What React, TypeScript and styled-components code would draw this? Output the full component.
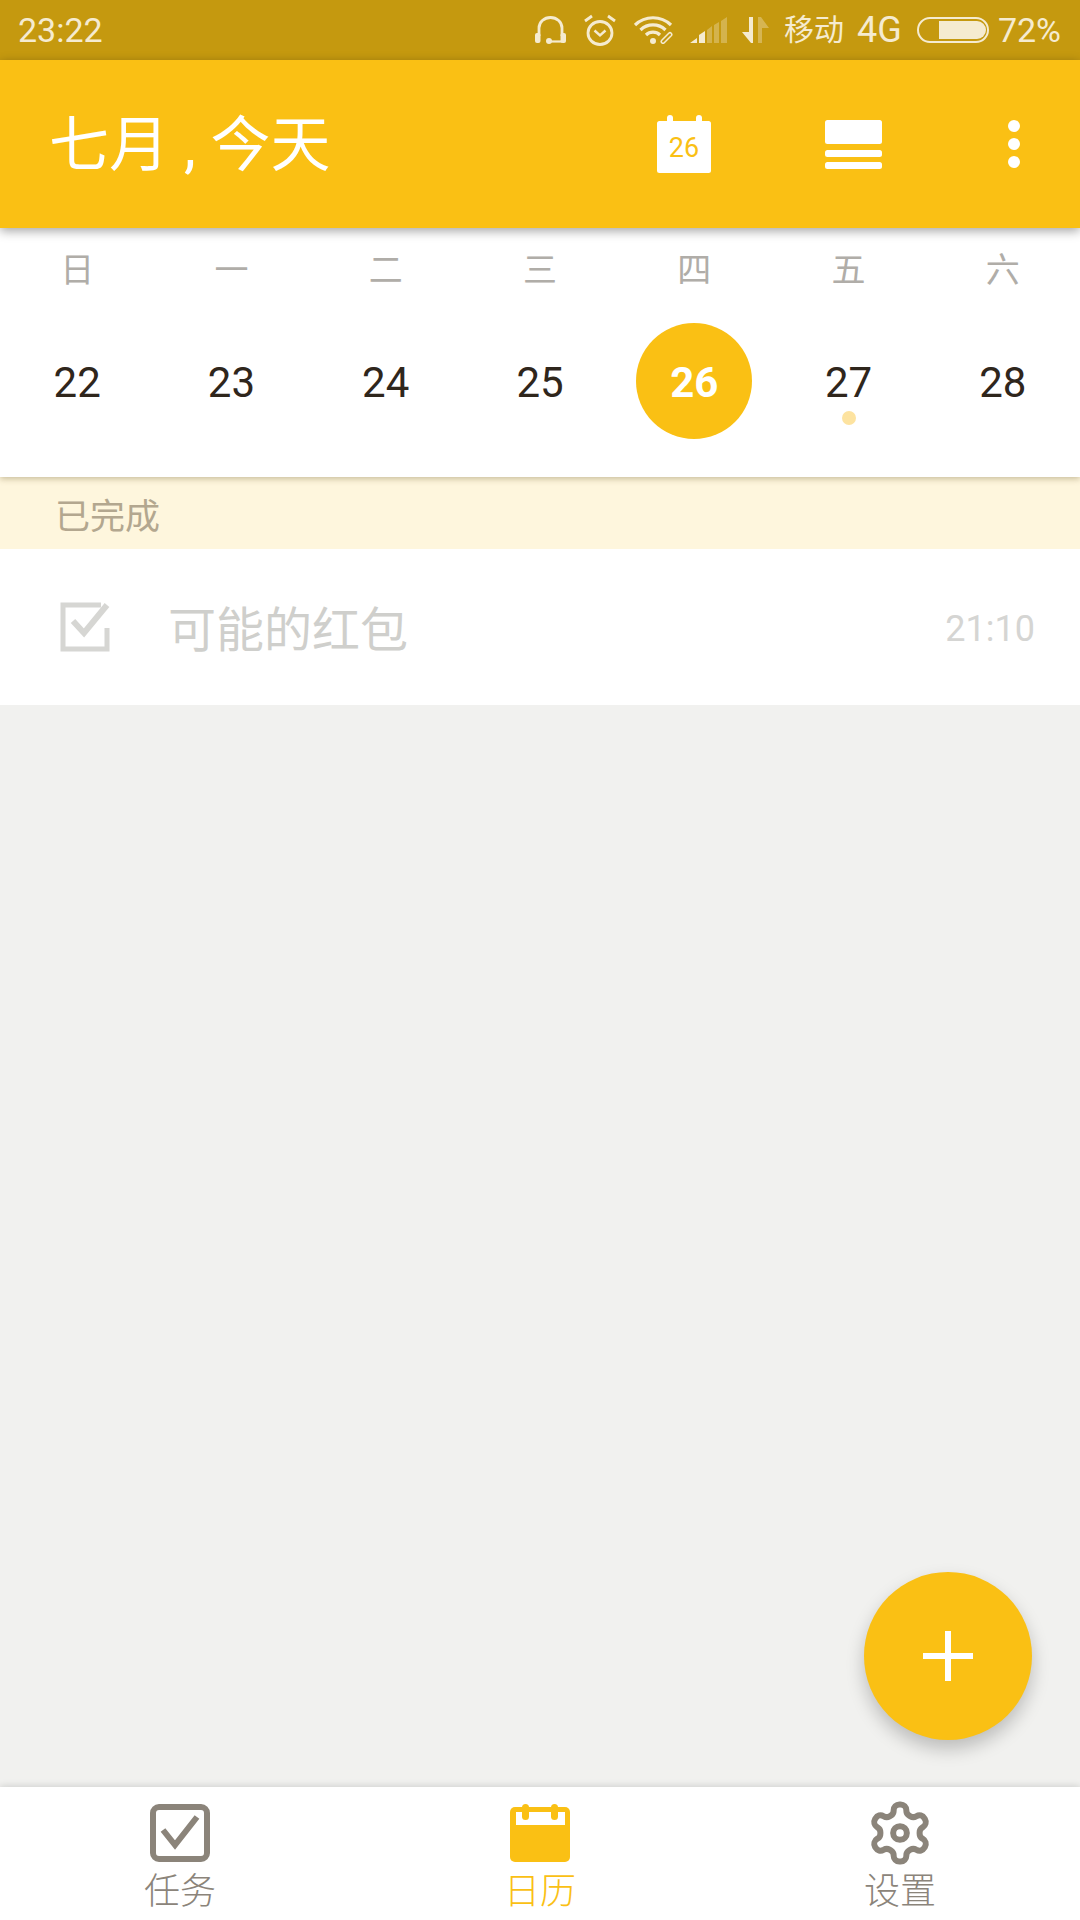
import React from "react";
import styled, { createGlobalStyle } from "styled-components";

const YELLOW = "#fac014";
const STATUS_INK = "#f5ebd0";
const NAV_GREY = "#8b847a";
const FONT = `Roboto, "Noto Sans CJK SC", sans-serif`;

const GlobalStyle = createGlobalStyle`
  html, body {
    margin: 0;
    padding: 0;
    background: #f1f1ef;
  }
  * {
    box-sizing: border-box;
  }
`;

const S = {
  Page: styled.div`
    width: 1080px;
    height: 1920px;
    display: flex;
    flex-direction: column;
    overflow: hidden;
    font-family: ${FONT};
    background: #f1f1ef;
  `,
  StatusBar: styled.div`
    height: 60px;
    flex: none;
    display: flex;
    align-items: center;
    padding: 0 19px 0 18px;
    background: #c5990f;
    color: ${STATUS_INK};
    font-size: 34px;
    line-height: 60px;
  `,
  Clock: styled.span`
    flex: 1;
  `,
  StatusIcons: styled.div`
    display: flex;
    align-items: center;
  `,
  StatusText: styled.span<{ $left: number; $size?: number }>`
    margin-left: ${({ $left }) => $left}px;
    font-size: ${({ $size }) => $size ?? 34}px;
  `,
  StatusGlyph: styled.svg<{ $left: number }>`
    display: block;
    margin-left: ${({ $left }) => $left}px;
  `,
  AppBar: styled.header`
    height: 168px;
    flex: none;
    display: flex;
    align-items: center;
    padding-left: 49px;
    background: ${YELLOW};
    color: #fff;
    position: relative;
    z-index: 3;
    box-shadow: 0 3px 10px rgba(0, 0, 0, 0.36);
  `,
  Title: styled.h1`
    flex: 1;
    margin: 4px 0 0;
    font-size: 60px;
    font-weight: 400;
    line-height: 1;
    white-space: pre;
  `,
  ActionSlot: styled.div<{ $width: number }>`
    width: ${({ $width }) => $width}px;
    height: 100%;
    display: flex;
    align-items: center;
    justify-content: center;
  `,
  CalendarAction: styled.div`
    width: 54px;
    height: 58px;
    position: relative;
  `,
  CalendarActionDay: styled.span`
    position: absolute;
    left: 0;
    right: 0;
    top: 17px;
    text-align: center;
    color: ${YELLOW};
    font-size: 27px;
    line-height: 32px;
  `,
  Week: styled.section`
    height: 249px;
    flex: none;
    background: #fff;
    position: relative;
    z-index: 2;
    box-shadow: 0 2px 6px rgba(90, 70, 20, 0.32);
  `,
  WeekRow: styled.div`
    display: grid;
    grid-template-columns: repeat(7, 1fr);
  `,
  WeekdayRow: styled.div`
    display: grid;
    grid-template-columns: repeat(7, 1fr);
    padding-top: 22px;
    height: 95px;
  `,
  Weekday: styled.span`
    text-align: center;
    font-size: 34px;
    line-height: 40px;
    color: #b0ada8;
  `,
  DayCell: styled.div`
    height: 116px;
    display: flex;
    align-items: center;
    justify-content: center;
    position: relative;
  `,
  DayNumber: styled.span<{ $today?: boolean }>`
    width: 116px;
    height: 116px;
    padding-top: 2px;
    display: flex;
    align-items: center;
    justify-content: center;
    border-radius: 50%;
    font-size: 42px;
    font-weight: ${({ $today }) => ($today ? 700 : 400)};
    color: ${({ $today }) => ($today ? "#fff" : "#2f261c")};
    background: ${({ $today }) => ($today ? YELLOW : "transparent")};
  `,
  EventDot: styled.span`
    position: absolute;
    left: 50%;
    top: 88px;
    width: 14px;
    height: 14px;
    margin-left: -7px;
    border-radius: 50%;
    background: #fde3a0;
  `,
  SectionLabel: styled.div`
    height: 72px;
    flex: none;
    display: flex;
    align-items: center;
    padding-left: 55px;
    background: #fef6dd;
    color: #b3a78f;
    font-size: 35px;
  `,
  TaskRow: styled.div`
    height: 156px;
    flex: none;
    display: flex;
    align-items: center;
    padding: 0 45px 0 60px;
    background: #fff;
  `,
  TaskTitle: styled.span`
    flex: 1;
    margin-left: 58px;
    margin-bottom: 3px;
    font-size: 48px;
    color: #cfcfcc;
  `,
  TaskTime: styled.span`
    margin-top: 3px;
    font-size: 36px;
    color: #d5d5d3;
  `,
  Content: styled.main`
    flex: 1;
    position: relative;
    background: #f1f1ef;
  `,
  Fab: styled.button`
    position: absolute;
    right: 48px;
    bottom: 47px;
    width: 168px;
    height: 168px;
    padding: 0;
    border: 0;
    border-radius: 50%;
    display: flex;
    align-items: center;
    justify-content: center;
    background: ${YELLOW};
    box-shadow: 0 9px 18px rgba(0, 0, 0, 0.22);
  `,
  BottomNav: styled.nav`
    height: 133px;
    flex: none;
    display: grid;
    grid-template-columns: repeat(3, 1fr);
    background: #fff;
    position: relative;
    box-shadow: 0 -1px 7px rgba(0, 0, 0, 0.14);
  `,
  NavItem: styled.div<{ $active?: boolean }>`
    display: flex;
    flex-direction: column;
    align-items: center;
    color: ${({ $active }) => ($active ? YELLOW : NAV_GREY)};
    font-size: 36px;
    font-weight: 300;
  `,
  NavIcon: styled.div`
    height: 81px;
    display: flex;
    align-items: flex-end;
    padding-bottom: 6px;
  `,
  NavLabel: styled.span`
    line-height: 40px;
    margin-top: 4px;
  `,
  GearSvg: styled.svg`
    display: block;
    margin-bottom: -3px;
  `,
};

const WEEKDAYS = ["日", "一", "二", "三", "四", "五", "六"];
const DAYS = [22, 23, 24, 25, 26, 27, 28];

const HeadsetGlyph = () => (
  <S.StatusGlyph $left={0} width="31" height="28" viewBox="0 0 31 28">
    <path d="M4 20V12a11.500 10.500 0 0 1 23 0v8" fill="none" stroke={STATUS_INK} strokeWidth="2.800" />
    <rect x="0" y="17" width="5.500" height="10" rx="2" fill={STATUS_INK} />
    <rect x="25.500" y="17" width="5.500" height="10" rx="2" fill={STATUS_INK} />
    <path d="M14 25.500h13" stroke={STATUS_INK} strokeWidth="2.200" />
    <circle cx="14" cy="25" r="3" fill={STATUS_INK} />
  </S.StatusGlyph>
);

const AlarmGlyph = () => (
  <S.StatusGlyph $left={18} width="32" height="32" viewBox="0 0 32 32">
    <ellipse cx="16" cy="19" rx="12" ry="11.500" fill="none" stroke={STATUS_INK} strokeWidth="2.800" />
    <path d="M10.500 16.500l5.500 5 5.500-5" fill="none" stroke={STATUS_INK} strokeWidth="2.400" />
    <path d="M1 7l7-5M31 7l-7-5" stroke={STATUS_INK} strokeWidth="2.800" />
  </S.StatusGlyph>
);

const WifiGlyph = () => (
  <S.StatusGlyph $left={18} width="41" height="28" viewBox="0 0 41 28">
    <path d="M1 9a26 26 0 0 1 36 0M6.500 14a18 18 0 0 1 25 0M12 19a10 10 0 0 1 14 0" fill="none" stroke={STATUS_INK} strokeWidth="3.200" />
    <circle cx="19" cy="25" r="3" fill={STATUS_INK} />
    <path d="M29 25.500l7-7" stroke={STATUS_INK} strokeWidth="5" strokeLinecap="round" />
    <path d="M29 25.500l7-7" stroke="#c5990f" strokeWidth="2" strokeLinecap="round" />
  </S.StatusGlyph>
);

const SignalGlyph = () => (
  <S.StatusGlyph $left={15} width="37" height="26" viewBox="0 0 37 26">
    <path d="M0 26l7-5v5zM9 26v-8l6-4v12z" fill={STATUS_INK} />
    <path d="M17 26V13l5-4v17zM24 26V8l5-3v21zM31 26V4l6-4v26z" fill={STATUS_INK} opacity="0.32" />
  </S.StatusGlyph>
);

const TrafficGlyph = () => (
  <S.StatusGlyph $left={15} width="27" height="26" viewBox="0 0 27 26">
    <path d="M7 0h4v26H9L0 15h7z" fill={STATUS_INK} />
    <path d="M16 0h3l8 11h-7v15h-4z" fill={STATUS_INK} opacity="0.35" />
  </S.StatusGlyph>
);

const BatteryGlyph = () => (
  <S.StatusGlyph $left={15} width="72" height="26" viewBox="0 0 72 26">
    <rect x="1" y="1" width="70" height="24" rx="12" fill="none" stroke={STATUS_INK} strokeWidth="2" />
    <path d="M22 4h38a9 9 0 0 1 0 18H22z" fill={STATUS_INK} />
  </S.StatusGlyph>
);

const ListViewIcon = () => (
  <svg width="57" height="49" viewBox="0 0 57 49">
    <rect x="0" y="0" width="57" height="24" rx="2.500" fill="#fff" />
    <rect x="0" y="30" width="57" height="7" rx="2.500" fill="#fff" />
    <rect x="0" y="42" width="57" height="7" rx="2.500" fill="#fff" />
  </svg>
);

const MoreIcon = () => (
  <svg width="12" height="48" viewBox="0 0 12 48">
    <circle cx="6" cy="6" r="6" fill="#fff" />
    <circle cx="6" cy="24" r="6" fill="#fff" />
    <circle cx="6" cy="42" r="6" fill="#fff" />
  </svg>
);

const DoneCheckIcon = () => (
  <svg width="50" height="50" viewBox="0 0 50 50">
    <path d="M41 3H3v44h44V26" fill="none" stroke="#d6d6d3" strokeWidth="5" />
    <path d="M13 19l11 12L47 3" fill="none" stroke="#d6d6d3" strokeWidth="6" />
  </svg>
);

const PlusIcon = () => (
  <svg width="50" height="50" viewBox="0 0 50 50">
    <path d="M25 0v50M0 25h50" stroke="#fff" strokeWidth="6" />
  </svg>
);

const TasksIcon = () => (
  <svg width="60" height="58" viewBox="0 0 60 58">
    <rect x="3" y="3" width="54" height="52" rx="6" fill="none" stroke={NAV_GREY} strokeWidth="6" />
    <path d="M13 26l12 15 22-28" fill="none" stroke={NAV_GREY} strokeWidth="6" />
  </svg>
);

const CalendarIcon = () => (
  <svg width="60" height="58" viewBox="0 0 60 58">
    <path d="M5 3h50a5 5 0 0 1 5 5v45a5 5 0 0 1-5 5H5a5 5 0 0 1-5-5V8a5 5 0 0 1 5-5z" fill={YELLOW} />
    <rect x="6" y="8" width="49" height="13" fill="#fff" />
    <rect x="12" y="0" width="7" height="16" rx="3.500" fill={YELLOW} />
    <rect x="41" y="0" width="7" height="16" rx="3.500" fill={YELLOW} />
  </svg>
);

const GearIcon = () => (
  <S.GearSvg width="60" height="64" viewBox="1.500 0.900 21 22.200" fill="none" stroke={NAV_GREY} strokeWidth="2.100" strokeLinecap="round" strokeLinejoin="round">
    <path d="M12.220 2h-.44a2 2 0 0 0-2 2v.18a2 2 0 0 1-1 1.730l-.43.250a2 2 0 0 1-2 0l-.15-.080a2 2 0 0 0-2.730.730l-.22.380a2 2 0 0 0 .730 2.730l.15.100a2 2 0 0 1 1 1.720v.510a2 2 0 0 1-1 1.740l-.15.090a2 2 0 0 0-.730 2.730l.22.380a2 2 0 0 0 2.730.730l.15-.080a2 2 0 0 1 2 0l.43.250a2 2 0 0 1 1 1.730V20a2 2 0 0 0 2 2h.44a2 2 0 0 0 2-2v-.18a2 2 0 0 1 1-1.730l.43-.250a2 2 0 0 1 2 0l.15.080a2 2 0 0 0 2.730-.730l.22-.390a2 2 0 0 0-.730-2.730l-.15-.080a2 2 0 0 1-1-1.740v-.500a2 2 0 0 1 1-1.740l.15-.090a2 2 0 0 0 .730-2.730l-.22-.380a2 2 0 0 0-2.730-.730l-.15.080a2 2 0 0 1-2 0l-.43-.250a2 2 0 0 1-1-1.730V4a2 2 0 0 0-2-2z" />
    <circle cx="12" cy="12" r="2.400" />
  </S.GearSvg>
);

const App: React.FC = () => {
  return (
    <S.Page>
      <GlobalStyle />
      <S.StatusBar>
        <S.Clock>23:22</S.Clock>
        <S.StatusIcons>
          <HeadsetGlyph />
          <AlarmGlyph />
          <WifiGlyph />
          <SignalGlyph />
          <TrafficGlyph />
          <S.StatusText $left={15} $size={30}>移动</S.StatusText>
          <S.StatusText $left={13} $size={36}>4G</S.StatusText>
          <BatteryGlyph />
          <S.StatusText $left={9}>72%</S.StatusText>
        </S.StatusIcons>
      </S.StatusBar>

      <S.AppBar>
        <S.Title>七月 , 今天</S.Title>
        <S.ActionSlot $width={148}>
          <S.CalendarAction>
            <svg width="54" height="58" viewBox="0 0 54 58">
              <rect x="0" y="6" width="54" height="52" rx="2.500" fill="#fff" />
              <rect x="10" y="0" width="6" height="12" rx="3" fill="#fff" />
              <rect x="39" y="0" width="6" height="12" rx="3" fill="#fff" />
            </svg>
            <S.CalendarActionDay>26</S.CalendarActionDay>
          </S.CalendarAction>
        </S.ActionSlot>
        <S.ActionSlot $width={190}>
          <ListViewIcon />
        </S.ActionSlot>
        <S.ActionSlot $width={132}>
          <MoreIcon />
        </S.ActionSlot>
      </S.AppBar>

      <S.Week>
        <S.WeekdayRow>
          {WEEKDAYS.map((day) => (
            <S.Weekday key={day}>{day}</S.Weekday>
          ))}
        </S.WeekdayRow>
        <S.WeekRow>
          {DAYS.map((day) => (
            <S.DayCell key={day}>
              <S.DayNumber $today={day === 26}>{day}</S.DayNumber>
              {day === 27 && <S.EventDot />}
            </S.DayCell>
          ))}
        </S.WeekRow>
      </S.Week>

      <S.SectionLabel>已完成</S.SectionLabel>
      <S.TaskRow>
        <DoneCheckIcon />
        <S.TaskTitle>可能的红包</S.TaskTitle>
        <S.TaskTime>21:10</S.TaskTime>
      </S.TaskRow>

      <S.Content>
        <S.Fab type="button" aria-label="add">
          <PlusIcon />
        </S.Fab>
      </S.Content>

      <S.BottomNav>
        <S.NavItem>
          <S.NavIcon>
            <TasksIcon />
          </S.NavIcon>
          <S.NavLabel>任务</S.NavLabel>
        </S.NavItem>
        <S.NavItem $active>
          <S.NavIcon>
            <CalendarIcon />
          </S.NavIcon>
          <S.NavLabel>日历</S.NavLabel>
        </S.NavItem>
        <S.NavItem>
          <S.NavIcon>
            <GearIcon />
          </S.NavIcon>
          <S.NavLabel>设置</S.NavLabel>
        </S.NavItem>
      </S.BottomNav>
    </S.Page>
  );
};

export default App;
